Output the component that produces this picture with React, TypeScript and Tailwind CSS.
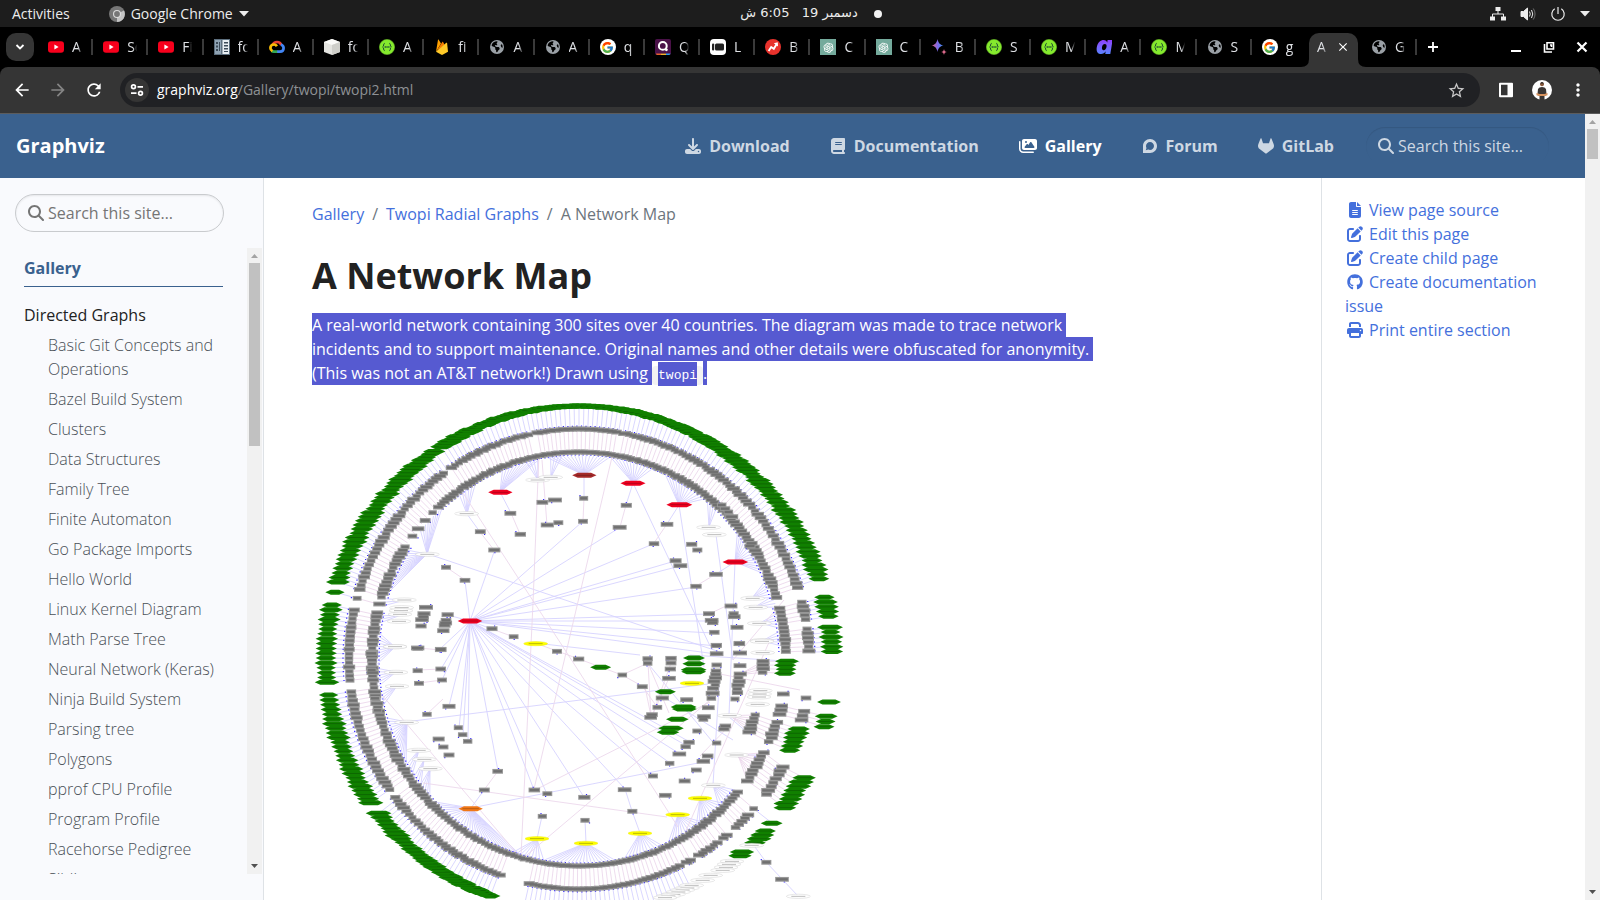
import type { ReactNode } from "react";
import {
  FaBook,
  FaDiscourse,
  FaDownload,
  FaEarthAmericas,
  FaFileLines,
  FaGithub,
  FaGitlab,
  FaImages,
  FaMagnifyingGlass,
  FaPenToSquare,
  FaPrint,
} from "react-icons/fa6";
import { FcGoogle } from "react-icons/fc";
import { AiOutlineOpenAI } from "react-icons/ai";
import {
  MdArrowBack,
  MdArrowForward,
  MdClose,
  MdMoreVert,
  MdRefresh,
  MdStarOutline,
} from "react-icons/md";

/* ---------- favicons ---------- */

const YouTube = () => (
  <svg viewBox="0 0 16 16" className="size-4">
    <rect x="0" y="2.3" width="16" height="11.4" rx="3" fill="#f8001c" />
    <path d="M6.4 5.5v5l4.2-2.5z" fill="#fff" />
  </svg>
);
const Notebook = () => (
  <svg viewBox="0 0 16 16" className="size-4">
    <rect width="16" height="16" fill="#5d6f7e" />
    <rect x="1" y="1" width="6" height="14" fill="#8fa3b3" />
    <rect x="8.5" y="1" width="6.5" height="14" fill="#e8eef2" />
    <path d="M2 3h2v2H2zM2 6.5h2v2H2zM2 10h2v2H2zM5 3h1v9H5z" fill="#3c4b58" />
    <path d="M10 3h4v1.5h-4zM10 6h4v1.5h-4zM10 9h4v1.5h-4zM10 12h4v1h-4z" fill="#3c4b58" />
  </svg>
);
const Cloud = () => (
  <svg viewBox="0 0 16 16" className="size-4" fill="none" strokeWidth="2.7">
    <path d="M3.6 6.2C4.4 3.9 6 3 8 3c2.100 0 3.700 1.200 4.300 3.200" stroke="#ea4335" />
    <path d="M12 5.500c1.700.8 2.600 2 2.600 3.500 0 2.200-1.500 3.600-3.600 3.600H8" stroke="#4285f4" />
    <path d="M8.200 12.600H5c-1 0-1.700-.2-2.300-.7" stroke="#34a853" />
    <path d="M3.400 12.200C2 11.300 1.400 10.300 1.400 9c0-2 1.500-3.500 3.500-3.500 1.300 0 2.300.6 3 1.700" stroke="#fbbc05" />
  </svg>
);
const Box = () => (
  <svg viewBox="0 0 16 16" className="size-4">
    <path d="M8 0l8 3v10l-8 3-8-3V3z" fill="#e4e4e0" />
    <path d="M8 0l8 3-8 3-8-3z" fill="#fafaf8" />
    <path d="M8 6l8-3v10l-8 3z" fill="#cfcfca" />
  </svg>
);
const Swagger = () => (
  <svg viewBox="0 0 16 16" className="size-4" fill="none" stroke="#1d4a33">
    <circle cx="8" cy="8" r="7.600" fill="#85ea2d" stroke="#6bbf2a" strokeWidth=".6" />
    <path d="M5.700 4.300C4 4.300 5.300 7.500 3.600 8c1.700.5.4 3.700 2.100 3.700M10.300 4.300c1.700 0 .4 3.200 2.100 3.700-1.700.5-.4 3.700-2.100 3.700" strokeWidth="1" />
    <path d="M5.600 8h5" strokeWidth="1.300" strokeDasharray="1.300 .5" />
  </svg>
);
const Firebase = () => (
  <svg viewBox="0 0 16 16" className="size-4">
    <path d="M2 12.800L4 .8c.1-.4.5-.5.700-.1L7 4.600z" fill="#ffa000" />
    <path d="M2 12.800L8.300 3c.2-.4.600-.4.800 0l1.500 3z" fill="#f57c00" />
    <path d="M2 12.800L12.300 3.800c.3-.2.700-.1.800.3L14 12.800l-5.400 3c-.4.200-.8.200-1.200 0z" fill="#ffca28" />
  </svg>
);
const Globe = () => (
  <span className="flex size-4 shrink-0 items-center justify-center">
    <FaEarthAmericas size={14} color="#9aa0a6" />
  </span>
);
const Google = () => (
  <span className="flex size-4 items-center justify-center rounded-full bg-white">
    <FcGoogle size={13} />
  </span>
);
const Quiz = () => (
  <svg viewBox="0 0 16 16" className="size-4">
    <rect width="16" height="16" rx="2" fill="#4a1148" />
    <circle cx="7.800" cy="6.900" r="3.900" fill="none" stroke="#fff" strokeWidth="2" />
    <circle cx="11.400" cy="10.800" r="1.400" fill="#fff" />
    <path d="M1 14.600h5V16H2q-1 0-1-1.400z" fill="#e8612c" />
    <path d="M6 14.600h5V16H6z" fill="#f0b429" />
    <path d="M11 14.600h4.500q-.3 1.400-1.500 1.400h-3z" fill="#2f9be8" />
  </svg>
);
const Panels = () => (
  <svg viewBox="0 0 16 16" className="size-4">
    <rect width="16" height="16" rx="4" fill="#fff" />
    <rect x="2" y="4.500" width="2.200" height="7" rx="1" fill="#222" />
    <rect x="5" y="4.500" width="9" height="7" rx="1.500" fill="#222" />
  </svg>
);
const Chart = () => (
  <svg viewBox="0 0 16 16" className="size-4">
    <circle cx="8" cy="8" r="8" fill="#e8322c" />
    <path d="M3.600 12l2.600-4 2.600 1.800 2.600-4.300" fill="none" stroke="#fff" strokeWidth="1.900" />
    <path d="M8.800 4.200l4-1 .2 4.200z" fill="#fff" />
  </svg>
);
const OpenAI = () => (
  <span className="flex size-4 items-center justify-center bg-[#74aa9c]">
    <AiOutlineOpenAI size={13} color="#fff" />
  </span>
);
const Bard = () => (
  <svg viewBox="0 0 16 16" className="size-4">
    <defs>
      <linearGradient id="bard" x1="0" x2="1" y1="0.500" y2="0.500">
        <stop offset="0" stopColor="#e0607c" />
        <stop offset=".5" stopColor="#7f6be8" />
        <stop offset="1" stopColor="#3a8df0" />
      </linearGradient>
    </defs>
    <path d="M6.500 0c.8 4 2.200 5.600 6 6.500-3.800.9-5.200 2.500-6 6.500-.8-4-2.200-5.600-6-6.500 3.800-.9 5.200-2.500 6-6.500z" fill="url(#bard)" />
    <path d="M13 10c.4 1.900 1 2.600 3 3-2 .4-2.600 1.100-3 3-.4-1.900-1-2.600-3-3 2-.4 2.600-1.100 3-3z" fill="#d9688a" />
  </svg>
);
const LetterA = () => (
  <span className="flex size-4 items-center justify-center bg-linear-to-b from-[#8f35ff] to-[#4f86ff] bg-clip-text pb-1 font-['Inter',sans-serif] text-[26px] leading-4 font-black text-transparent italic">
    a
  </span>
);

const TABS: [ReactNode, string][] = [
  [<YouTube />, "A"],
  [<YouTube />, "Se"],
  [<YouTube />, "Fi"],
  [<Notebook />, "fo"],
  [<Cloud />, "A"],
  [<Box />, "fo"],
  [<Swagger />, "A"],
  [<Firebase />, "fi"],
  [<Globe />, "A"],
  [<Globe />, "A"],
  [<Google />, "q"],
  [<Quiz />, "Q"],
  [<Panels />, "L"],
  [<Chart />, "B"],
  [<OpenAI />, "C"],
  [<OpenAI />, "C"],
  [<Bard />, "B"],
  [<Swagger />, "S"],
  [<Swagger />, "M"],
  [<LetterA />, "A"],
  [<Swagger />, "M"],
  [<Globe />, "S"],
  [<Google />, "g"],
];

/* ---------- desktop bar, tab strip, toolbar ---------- */

function DesktopBar() {
  return (
    <div className="grid h-[27px] shrink-0 grid-cols-[1fr_auto_1fr] items-center bg-[#1d1d1d] pr-2 pl-3 text-sm text-[#ececec]">
      <div className="flex items-center">
        <button className="mr-[39px]">Activities</button>
        <button className="flex items-center gap-[6px]">
          <svg viewBox="0 0 16 16" className="size-4">
            <circle cx="8" cy="8" r="8" fill="#777" />
            <path d="M8 8l7-3.600A8 8 0 0 1 8 16z" fill="#c4c4c4" />
            <circle cx="8" cy="8" r="4" fill="#ddd" />
            <circle cx="8" cy="8" r="2.900" fill="#777" />
          </svg>
          Google Chrome
          <svg viewBox="0 0 10 6" className="h-[6px] w-[10px]" fill="#ececec">
            <path d="M0 0h10L5 5.500z" />
          </svg>
        </button>
      </div>
      <div className="flex items-center gap-4 pl-[18px]">
        <span dir="rtl" className="font-['DejaVu_Sans',sans-serif] text-[13px] whitespace-pre">
          دسمبر 19{"   "}6:05 ش
        </span>
        <span className="size-2 rounded-full bg-[#f2f2f2]" />
      </div>
      <div className="flex items-center justify-end gap-[14px] pr-[2px]">
        <svg viewBox="0 0 16 16" className="size-4" fill="#ececec">
          <path d="M5.500 1h5v4h-5zM0 10.500h5v4H0zM11 10.500h5v4h-5z" />
          <path d="M8 5v3M2.500 11V8h11v3" fill="none" stroke="#ececec" />
        </svg>
        <svg viewBox="0 0 16 16" className="size-4" fill="none" stroke="#ececec">
          <path d="M1 5.500h2.500L7.500 2v12l-4-3.500H1z" fill="#ececec" />
          <path d="M9.500 5.500q1.500 2.500 0 5M11.500 4q2.500 4 0 8" />
          <path d="M13.300 2.500q3.500 5.500 0 11" opacity=".4" />
        </svg>
        <svg viewBox="0 0 16 16" className="size-4" fill="none" stroke="#ececec" strokeWidth="1.200">
          <path d="M4.700 2.800a6.200 6.200 0 1 0 6.600 0M8 1v7" />
        </svg>
        <svg viewBox="0 0 10 6" className="h-[6px] w-[10px]" fill="#ececec">
          <path d="M0 0h10L5 5.500z" />
        </svg>
      </div>
    </div>
  );
}

function TabLabel({ children }: { children: ReactNode }) {
  return (
    <span className="w-[10px] shrink-0 overflow-hidden mask-r-from-60% text-sm whitespace-nowrap">
      {children}
    </span>
  );
}

function TabStrip() {
  return (
    <div className="flex h-10 shrink-0 items-center bg-black text-[#dfe1e5]">
      <button aria-label="Search tabs" className="ml-[6px] flex size-7 items-center justify-center rounded-[10px] bg-[#353535]">
        <svg viewBox="0 0 10 10" className="size-[10px]" fill="none" stroke="#fff" strokeWidth="1.800">
          <path d="M1.500 3L5 6.500 8.500 3" />
        </svg>
      </button>
      <div className="ml-1 flex flex-1 items-center">
        {TABS.map(([icon, title], i) => (
          <div key={i} className="flex h-4 min-w-0 flex-1 items-center gap-2 border-r-2 border-[#3a3a3a] pl-[10px] last:border-transparent">
            {icon}
            <TabLabel>{title}</TabLabel>
          </div>
        ))}
      </div>
      <div className="flex h-10 w-[293px] shrink-0 items-center">
        <div className="relative mx-[2px] mt-[6px] flex h-[34px] w-[49px] items-center gap-[9px] rounded-t-[10px] bg-[#353535] pb-[6px] pl-2">
          <svg viewBox="0 0 65 8" className="absolute bottom-0 -left-2 h-2 w-[65px]" fill="#353535">
            <path d="M8 0v8H0q8 0 8-8zM57 0v8h8q-8 0-8-8z" />
          </svg>
          <TabLabel>A</TabLabel>
          <button aria-label="Close tab">
            <MdClose size={14} color="#fff" />
          </button>
        </div>
        <div className="ml-[11px] flex h-4 w-[46px] items-center gap-2 border-r-2 border-[#3a3a3a]">
          <Globe />
          <TabLabel>G</TabLabel>
        </div>
        <button aria-label="New tab" className="ml-[10px]">
          <svg viewBox="0 0 12 12" className="size-3" stroke="#fff" strokeWidth="1.800">
            <path d="M6 1v10M1 6h10" />
          </svg>
        </button>
        <div className="ml-auto flex items-center gap-[21px] pr-3">
          <button aria-label="Minimize">
            <svg viewBox="0 0 12 12" className="size-3" stroke="#fff" strokeWidth="2">
              <path d="M1 10h10" />
            </svg>
          </button>
          <button aria-label="Restore">
            <svg viewBox="0 0 12 12" className="size-3" fill="none" stroke="#fff" strokeWidth="1.600">
              <path d="M4 1.800h6.500V8H4zM1.500 3v8H9" />
              <path d="M7 4h1.500v2" />
            </svg>
          </button>
          <button aria-label="Close">
            <svg viewBox="0 0 12 12" className="size-3" stroke="#fff" strokeWidth="2.200">
              <path d="M1.500 1.500l9 9M10.500 1.500l-9 9" />
            </svg>
          </button>
        </div>
      </div>
    </div>
  );
}

function Toolbar() {
  return (
    <div className="shrink-0 bg-black">
      <div className="flex h-[47px] items-center rounded-t-lg border-b border-[#5c5c5c] bg-[#353535] pr-3 pl-3">
        <button aria-label="Back" className="mr-4">
          <MdArrowBack size={20} color="#fff" />
        </button>
        <button aria-label="Forward" className="mr-4">
          <MdArrowForward size={20} color="#858585" />
        </button>
        <button aria-label="Reload" className="mr-4">
          <MdRefresh size={20} color="#fff" />
        </button>
        <div className="flex h-[34px] flex-1 items-center rounded-full bg-[#202124] pr-[14px] pl-[5px]">
          <button aria-label="Site information" className="mr-2 flex size-6 items-center justify-center rounded-full bg-[#353535]">
            <svg viewBox="0 0 14 14" className="size-[14px]" fill="none" stroke="#fff" strokeWidth="1.700">
              <circle cx="3.500" cy="3.800" r="1.900" />
              <path d="M7.500 3.800H13M1 10.200h5.500" />
              <circle cx="10.500" cy="10.200" r="1.900" />
            </svg>
          </button>
          <span className="flex-1 text-sm text-[#8e9195]">
            <span className="text-white">graphviz.org</span>/Gallery/twopi/twopi2.html
          </span>
          <button aria-label="Bookmark">
            <MdStarOutline size={19} color="#c7c7c7" />
          </button>
        </div>
        <button aria-label="Side panel" className="mr-[18px] ml-[18px]">
          <svg viewBox="0 0 16 16" className="size-4">
            <path d="M2 1.800h12v12.400H2z" fill="none" stroke="#fff" strokeWidth="2" strokeLinejoin="round" />
            <path d="M9.500 2H14v12H9.500z" fill="#fff" />
          </svg>
        </button>
        <button aria-label="Profile" className="mr-4">
          <svg viewBox="0 0 20 20" className="size-5">
            <circle cx="10" cy="10" r="10" fill="#fff" />
            <circle cx="10" cy="4.300" r="2" fill="#8a5a3c" />
            <path d="M8 3.500q2-3 4 0z" fill="#222" />
            <path d="M6 9q1-2 4-2t4 2l.6 6-2.100 1v4H7.500v-4l-2.100-1z" fill="#3b3634" />
            <path d="M4.500 13l3 1h5l3-1v2.200l-3 .8h-5l-3-.8z" fill="#d8935f" />
          </svg>
        </button>
        <button aria-label="Menu">
          <MdMoreVert size={20} color="#fff" />
        </button>
      </div>
    </div>
  );
}

/* ---------- scroll bars ---------- */

function ScrollBar({ thumb }: { thumb: string }) {
  return (
    <div aria-hidden className="flex w-[15px] shrink-0 flex-col items-center bg-[#f1f1f1]">
      <svg viewBox="0 0 15 15" className="size-[15px] shrink-0" fill="#a3a3a3">
        <path d="M4 10h7L7.500 6z" />
      </svg>
      <div className={`w-[11px] bg-[#c1c1c1] ${thumb}`} />
      <svg viewBox="0 0 15 15" className="mt-auto size-[15px] shrink-0" fill="#505050">
        <path d="M4 5h7L7.500 9z" />
      </svg>
    </div>
  );
}

/* ---------- the radial network drawing ---------- */

type Pt = [number, number];
const CX = 579;
const CY = 659;
const OUTER = 253;
const MIDDLE = 230;
const INNER = 207;
const STEP = 1.1;

const polar = (r: number, deg: number): Pt => {
  const a = (deg * Math.PI) / 180;
  return [CX + r * Math.sin(a), CY - r * Math.cos(a)];
};
const noise = (n: number) => {
  const v = Math.sin(n * 12.9898) * 43758.5453;
  return v - Math.floor(v);
};
const arc = (from: number, to: number) => {
  const out: number[] = [];
  for (let a = from; a <= to + 0.01; a += STEP) out.push(a);
  return out;
};
/* Sheets of the drawing: every sheet has its own origin, at three units to the pixel. */
const sheet = (ox: number, oy: number) => (list: Pt[]): Pt[] =>
  list.map(([x, y]) => [ox + x / 3, oy + y / 3]);
const nw = sheet(300, 390);
const ne = sheet(570, 390);
const sw = sheet(300, 640);
const se = sheet(570, 640);
const chain = (x1: number, y1: number, x2: number, y2: number, n: number): Pt[] =>
  Array.from({ length: n }, (_, i) => [
    x1 + ((x2 - x1) * i) / (n - 1) + (noise(i + x1) - 0.5) * 6,
    y1 + ((y2 - y1) * i) / (n - 1),
  ]);

const outerAngles = [
  [-159.5, -127], [-124.6, -97.5], [-95.3, -77], [-74.7, -74.7], [-72.3, -34.5],
  [-33, 72.3], [75.9, 80.5], [82.8, 88.4],
].flatMap(([a, b]) => arc(a, b));
const middleAngles = [
  [-160, -127], [-124.6, -97.5], [-95.3, -77], [-74.7, -74.7], [-72.4, -35.8], [-33.7, -12.4],
  [-10.4, 9.7], [11.4, 72.3], [75.7, 80.5], [82.5, 88.3], [130.6, 130.6], [132.7, 138],
  [140, 141.2], [143, 149], [151, 152.2], [154, 193.5],
].flatMap(([a, b]) => arc(a, b));
const innerAngles = [
  [-76.8 - 153.200, -76.8], [-74.6, -74.6], [-72.6, -56.4], [-53.6, -53.6], [-51, -51],
  [-48, -48], [-45, -45], [-42.8, 73.4], [75.8, 88.3],
].flatMap(([a, b]) => arc(a, b));

const grayNodes: Pt[] = [
  ...nw([
    [631, 370], [541, 425], [661, 433], [583, 480], [438, 532], [495, 571], [727, 337], [765, 330],
    [742, 405], [775, 398], [378, 652], [372, 671], [370, 680], [366, 689], [363, 708], [443, 674],
    [438, 691], [437, 699], [434, 706], [430, 722], [576, 716], [641, 740], [353, 775], [422, 778],
  ]),
  ...ne([
    [41, 325], [39, 394], [169, 346], [149, 412], [291, 403], [252, 461], [365, 463], [382, 480],
    [317, 512], [331, 527], [438, 553], [378, 589], [483, 648], [417, 671], [425, 691], [428, 698],
    [491, 671], [493, 680], [501, 712], [433, 727], [508, 761], [439, 767],
    [455, 345], [465, 356], [475, 366], [485, 380], [545, 460], [540, 468],
  ]),
  ...sw([
    [353, 24], [422, 29], [353, 92], [422, 87], [357, 130], [426, 120], [381, 223], [447, 199],
    [475, 263], [488, 284], [503, 304], [416, 297], [430, 321], [447, 345], [593, 394], [553, 450],
    [703, 450], [742, 461], [727, 529], [771, 34], [214, 40], [215, 90], [218, 98], [225, 175],
    [233, 211], [293, 360],
  ]),
  ...se([
    [26, 57], [157, 105], [233, 56], [233, 70], [217, 140], [303, 55], [303, 69], [301, 87],
    [297, 115], [277, 174], [262, 202], [246, 224], [242, 232], [350, 179], [415, 203], [402, 230],
    [400, 238], [381, 273], [357, 307], [347, 320], [328, 342], [299, 370], [249, 408], [413, 348],
    [400, 364], [379, 390], [344, 423], [286, 466], [164, 449], [187, 514], [43, 472], [45, 541],
    [440, 309], [466, 258], [462, 267], [439, 16], [440, 41], [508, 10], [510, 39], [440, 75],
    [510, 77], [428, 160], [424, 175], [495, 177], [640, 162], [708, 174], [589, 667], [636, 718],
    ...chain(437, 93, 432, 145, 6),
    ...chain(508, 102, 500, 158, 6),
    ...chain(580, 64, 580, 97, 4),
    ...chain(632, 198, 628, 223, 3),
    ...chain(700, 214, 693, 240, 3),
    ...chain(555, 225, 535, 276, 6),
    ...chain(622, 247, 598, 305, 6),
    ...chain(582, 338, 530, 423, 9),
    ...chain(640, 381, 588, 463, 8),
  ]),
];
const greenNodes: Pt[] = se([
  [92, 82], [372, 54], [372, 71], [371, 89], [371, 95], [286, 155], [341, 201], [343, 207],
  [322, 238], [303, 265], [294, 277], [777, 186], [605, 550], [516, 636], [510, 647],
  ...chain(650, 64, 645, 100, 4),
  ...chain(768, 229, 760, 260, 3),
  ...chain(687, 267, 660, 331, 6),
  ...chain(700, 413, 643, 503, 8),
  ...chain(587, 573, 553, 608, 4),
]);
const whiteNodes: Pt[] = [
  ...nw([[713, 270], [752, 262], [500, 371], [382, 493], [313, 630], [305, 653], [303, 662], [300, 673], [297, 694], [285, 770]]),
  ...ne([[416, 412], [433, 434], [548, 625], [557, 652], [568, 700], [576, 752]]),
  ...sw([[285, 20], [288, 97], [291, 139], [320, 247], [356, 331], [373, 358], [391, 386]]),
  ...se([
    [576, 4], [578, 38], [571, 152], [569, 162], [567, 171], [563, 193], [479, 227], [500, 345],
    [430, 436], [545, 616], [486, 664], [477, 673], [468, 682], [458, 691], [422, 706], [398, 721],
    [365, 736], [352, 744], [338, 750], [325, 756], [310, 763], [295, 768], [285, 773], [685, 769],
  ]),
];
const yellowNodes: Pt[] = [
  ...nw([[707, 761]]),
  ...sw([[711, 596]]),
  ...se([[366, 130], [390, 475], [323, 524], [210, 580], [48, 610]]),
];
const redNodes: Pt[] = [...nw([[601, 307], [510, 693]]), ...ne([[189, 280], [328, 344], [496, 516]])];

/* hub position, then the span of the inner ring that it feeds */
const fans: [Pt, number, number][] = [
  [[500, 492], -22, -10], [[584, 475], -9, 9], [[633, 483], 9, 22], [[679, 505], 25, 39],
  [[735, 562], 51, 66], [[538, 480], -15, -11], [[551, 477], -8, -4], [[467, 514], -36, -30],
  [[427, 554], -72, -57], [[427, 554], -51, -42], [[709, 527], 39, 43], [[752, 598], 67, 73],
  [[755, 607], 72, 76], [[760, 623], 77, 82], [[762, 641], 82, 87], [[395, 647], -92, -82],
  [[396, 672], -98, -92], [[397, 686], -104, -99], [[407, 722], -122, -106],
  [[419, 750], -125, -121], [[424, 760], -129, -125], [[430, 769], -133, -128],
  [[471, 808], -163, -134], [[537, 839], -170, -161], [[586, 843], -190, -170],
  [[640, 833], -204, -192], [[678, 815], -217, -205], [[700, 798], -225, -215],
  [[713, 785], -230, -223], [[405, 600], -75, -72], [[401, 615], -80, -77],
];

const HUB: Pt = [470, 621];
const hubTargets: Pt[] = [
  [494, 552], [465, 581], [582, 522], [619, 528], [653, 544], [675, 561], [680, 566], [696, 587],
  [709, 614], [711, 621], [714, 633], [716, 646], [716, 654], [492, 629], [444, 614], [440, 649],
  [441, 669], [442, 680], [449, 706], [459, 728], [463, 735], [468, 741], [498, 771], [534, 790],
  [547, 794], [584, 797], [625, 789], [653, 776], [670, 763], [680, 754], [687, 746], [690, 742],
];
const blueLines: [Pt, Pt][] = [
  [[428, 554], [720, 652]], [[405, 722], [708, 684]], [[471, 808], [703, 762]],
  [[633, 483], [710, 646]], [[679, 505], [704, 667]], [[735, 562], [729, 715]],
  [[716, 535], [733, 660]], [[535, 643], [640, 655]], [[500, 492], [511, 513]],
  [[467, 514], [480, 532]], [[584, 475], [584, 498]], [[633, 483], [626, 505]],
  [[679, 505], [667, 524]], [[735, 562], [716, 574]], [[471, 808], [484, 790]],
  [[537, 839], [542, 816]], [[586, 843], [585, 820]], [[640, 833], [632, 811]],
  [[632, 811], [625, 789]], [[713, 785], [720, 670]], [[690, 655], [800, 662]],
  [[728, 716], [748, 733]], [[736, 755], [760, 755]], [[645, 660], [716, 746]],
  [[657, 693], [733, 740]], [[755, 847], [766, 862]], [[766, 862], [782, 879]], [[782, 879], [798, 896]],
  [[754, 809], [772, 823]],
];
const pinkLines: [Pt, Pt][] = [
  [[539, 453], [533, 603]], [[533, 603], [521, 856]], [[612, 457], [534, 789]],
  [[463, 493], [578, 670]], [[578, 670], [678, 827]], [[382, 695], [520, 857]],
  [[423, 783], [667, 817]], [[710, 702], [535, 790]], [[710, 700], [521, 860]],
  [[770, 640], [685, 833]], [[511, 513], [520, 534]], [[480, 532], [494, 550]],
  [[584, 498], [583, 521]], [[626, 505], [620, 527]], [[667, 524], [654, 543]],
  [[716, 574], [696, 586]], [[446, 567], [465, 580]], [[726, 606], [709, 614]],
  [[648, 663], [669, 713]], [[648, 663], [651, 716]], [[645, 687], [651, 716]],
  [[643, 687], [657, 707]], [[671, 663], [652, 716]], [[669, 678], [653, 714]],
  [[622, 675], [642, 686]], [[622, 675], [648, 663]], [[720, 674], [800, 690]],
  [[484, 790], [498, 771]], [[443, 699], [427, 714]], [[418, 648], [441, 650]],
  [[418, 670], [441, 669]], [[419, 683], [442, 680]], [[492, 629], [514, 637]],
  [[579, 659], [622, 675]], [[535, 643], [579, 659]], [[542, 460], [547, 525]],
  [[733, 660], [784, 600]], [[700, 756], [730, 725]],
];
const extraLinks: [Pt[], Pt[]][] = [
  [se(chain(555, 225, 535, 276, 6)), se(chain(622, 247, 598, 305, 6))],
  [se(chain(622, 247, 598, 305, 6)), se(chain(687, 267, 660, 331, 6))],
  [se(chain(582, 338, 530, 423, 8)), se(chain(640, 381, 588, 463, 8))],
  [se(chain(640, 381, 588, 463, 8)), se(chain(700, 413, 643, 503, 8))],
  [se(chain(580, 64, 580, 97, 4)), se(chain(650, 64, 645, 100, 4))],
  [se(chain(508, 102, 508, 104, 4)), se(chain(580, 64, 580, 97, 4))],
  [se(chain(632, 198, 628, 223, 3)), se(chain(700, 214, 693, 240, 3))],
  [se(chain(700, 214, 693, 240, 3)), se(chain(768, 229, 760, 260, 3))],
  [se(chain(500, 345, 502, 347, 9)), se(chain(582, 338, 530, 423, 9))],
  [se(chain(479, 227, 481, 229, 6)), se(chain(555, 225, 535, 276, 6))],
];

const seg = ([x1, y1]: Pt, [x2, y2]: Pt) =>
  `M${x1.toFixed(1)} ${y1.toFixed(1)}L${x2.toFixed(1)} ${y2.toFixed(1)}`;

function Rects({ points, min, spread }: { points: Pt[]; min: number; spread: number }) {
  return (
    <>
      {points.map(([x, y], i) => {
        const w = min + noise(i + 3) * spread;
        return <rect key={i} x={x - w / 2} y={y - 2.4} width={w} height="4.800" fill="#989898" />;
      })}
      {points.map(([x, y], i) => {
        const w = min + noise(i + 3) * spread;
        return <rect key={i} x={x - w / 2 + 1} y={y - 1.2} width={w - 2} height="2.400" fill="#707070" />;
      })}
    </>
  );
}

function Hexagons({ points, fill, ink, min, spread }: { points: Pt[]; fill: string; ink: string; min: number; spread: number }) {
  return (
    <>
      {points.map(([x, y], i) => {
        const h = (min + noise(i + 7) * spread) / 2;
        return (
          <g key={i}>
            <path
              d={`M${x - h} ${y}L${x - h + 5.5} ${y - 2.5}H${x + h - 5.5}L${x + h} ${y}L${x + h - 5.5} ${y + 2.5}H${x - h + 5.5}Z`}
              fill={fill}
            />
            <path d={`M${x - h + 4} ${y}H${x + h - 4}`} stroke={ink} strokeWidth=".7" />
          </g>
        );
      })}
    </>
  );
}

function Ellipses({ points, fill, edge, ink }: { points: Pt[]; fill: string; edge: string; ink: string }) {
  return (
    <>
      {points.map(([x, y], i) => (
        <g key={i}>
          <ellipse cx={x} cy={y} rx="12" ry="2.100" fill={fill} stroke={edge} strokeWidth=".4" />
          <path d={`M${x - 7} ${y}H${x + 7}`} stroke={ink} strokeWidth=".8" />
        </g>
      ))}
    </>
  );
}

function NetworkMap() {
  const spokesOut = [...outerAngles, ...arc(154, 193.5)];
  const blue = [
    ...spokesOut.map((a) => seg(polar(MIDDLE, a), polar(OUTER, a))),
    ...fans.flatMap(([hub, a, b]) => arc(a, b).map((t) => seg(hub, polar(INNER - 3, t)))),
    ...hubTargets.map((p) => seg(HUB, p)),
    ...blueLines.map(([p, q]) => seg(p, q)),
  ].join("");
  const pink = [
    ...middleAngles.map((a) => seg(polar(INNER, a), polar(MIDDLE, a))),
    ...pinkLines.map(([p, q]) => seg(p, q)),
    ...extraLinks.flatMap(([from, to]) => from.map((p, i) => seg(p, to[i]))),
  ].join("");
  const ports: Pt[] = [
    ...innerAngles.map((a): Pt => {
      const [x, y] = polar(INNER, a);
      const s = Math.sin((a * Math.PI) / 180);
      return [x - s * 7, y + Math.cos((a * Math.PI) / 180) * 2.8];
    }),
    ...middleAngles.map((a): Pt => {
      const [x, y] = polar(MIDDLE, a);
      const s = Math.sin((a * Math.PI) / 180);
      return [x + s * 6, y - Math.cos((a * Math.PI) / 180) * 2.8];
    }),
    ...grayNodes.map(([x, y], i): Pt => [x + (noise(i) - 0.5) * 10, y + (i % 2 ? 2.6 : -2.6)]),
  ];
  return (
    <svg viewBox="312 403 536 536" className="block size-[536px] max-w-full" role="img" aria-label="Radial network map">
      <path d={blue} stroke="#d6d2ff" strokeWidth=".9" fill="none" />
      <path d={pink} stroke="#ecd8ec" strokeWidth=".9" fill="none" />
      <path
        d={ports.map(([x, y]) => `M${(x - 0.6).toFixed(1)} ${y.toFixed(1)}h1.200`).join("")}
        stroke="#3226ff"
        strokeWidth="1.200"
      />
      <Hexagons points={outerAngles.map((a) => polar(OUTER, a))} fill="#118000" ink="#0b5c00" min={19} spread={7} />
      <Rects points={middleAngles.map((a) => polar(MIDDLE, a))} min={8} spread={5} />
      <Rects points={innerAngles.map((a) => polar(INNER, a))} min={8} spread={5} />
      <Rects points={grayNodes} min={9} spread={5} />
      <Hexagons points={greenNodes} fill="#118000" ink="#0b5c00" min={20} spread={6} />
      <Ellipses points={whiteNodes} fill="#fff" edge="#c4c4c4" ink="#aaa" />
      <Ellipses points={yellowNodes} fill="#ff0" edge="#e8e800" ink="#a8a800" />
      <Hexagons points={redNodes} fill="#ee0020" ink="#a00018" min={24} spread={2} />
      <Hexagons points={ne([[43, 256]])} fill="#a52a2a" ink="#701c1c" min={24} spread={2} />
      <Hexagons points={sw([[512, 506]])} fill="#f07818" ink="#a85010" min={24} spread={2} />
    </svg>
  );
}

/* ---------- page ---------- */

const NAV = [
  { label: "Download", Icon: FaDownload, size: 16 },
  { label: "Documentation", Icon: FaBook, size: 16 },
  { label: "Gallery", Icon: FaImages, size: 18, active: true },
  { label: "Forum", Icon: FaDiscourse, size: 16 },
  { label: "GitLab", Icon: FaGitlab, size: 16 },
];

const GRAPHS = [
  "Basic Git Concepts and Operations",
  "Bazel Build System",
  "Clusters",
  "Data Structures",
  "Family Tree",
  "Finite Automaton",
  "Go Package Imports",
  "Hello World",
  "Linux Kernel Diagram",
  "Math Parse Tree",
  "Neural Network (Keras)",
  "Ninja Build System",
  "Parsing tree",
  "Polygons",
  "pprof CPU Profile",
  "Program Profile",
  "Racehorse Pedigree",
  "Siblings",
];

const PAGE_LINKS = [
  { label: "View page source", Icon: FaFileLines },
  { label: "Edit this page", Icon: FaPenToSquare },
  { label: "Create child page", Icon: FaPenToSquare },
  { label: "Create documentation issue", Icon: FaGithub },
  { label: "Print entire section", Icon: FaPrint },
];

function SiteHeader() {
  return (
    <header className="flex h-16 shrink-0 items-center bg-[#3a618e] pr-9 pl-4 text-white">
      <a href="#home" className="text-xl font-bold">
        Graphviz
      </a>
      <nav className="ml-auto flex gap-[38px] font-bold">
        {NAV.map(({ label, Icon, size, active }) => (
          <a key={label} href={`#${label}`} className={`flex items-center gap-[6px] ${active ? "text-white" : "text-[#ced8e3]"}`}>
            <span className={`flex justify-center ${active ? "w-[22px]" : "w-5"}`}>
              <Icon size={size} />
            </span>
            {label}
          </a>
        ))}
      </nav>
      <label className="ml-8 flex h-[38px] w-[183px] items-center gap-1 rounded-full pl-3 text-[#ced8e3] shadow-[inset_0_1px_1px_rgba(0,0,0,0.1)]">
        <FaMagnifyingGlass size={16} className="shrink-0" />
        <input type="search" aria-label="Search this site" placeholder="Search this site…" className="w-full min-w-0 bg-transparent outline-none placeholder:text-[#ced8e3]" />
      </label>
    </header>
  );
}

function Sidebar() {
  return (
    <aside className="flex w-[264px] shrink-0 flex-col border-r border-[#dee2e6] bg-[#f9fafd]">
      <label className="mt-4 ml-[15px] flex h-[38px] w-[209px] shrink-0 items-center gap-1 rounded-full border border-[#c9cbce] pl-3 text-[#757575] shadow-[inset_0_1px_2px_rgba(0,0,0,0.08)]">
        <FaMagnifyingGlass size={16} className="shrink-0" />
        <input type="search" aria-label="Search this site" placeholder="Search this site…" className="w-full min-w-0 bg-transparent outline-none placeholder:text-[#757575]" />
      </label>
      <div className="mt-4 mb-[26px] flex min-h-0 flex-1 pr-px">
        <nav className="min-w-0 flex-1 overflow-hidden pr-6 pl-6">
          <a href="#gallery" className="mt-2 block border-b border-[#3a618e] pb-[6px] font-bold text-[#3a618e]">
            Gallery
          </a>
          <a href="#directed" className="mt-4 block text-[#222]">
            Directed Graphs
          </a>
          <ul className="mt-[6px] flex flex-col gap-[6px] pl-6">
            {GRAPHS.map((name) => (
              <li key={name}>
                <a href={`#${name}`} className="-mr-3 block font-light text-[#495057]">
                  {name}
                </a>
              </li>
            ))}
          </ul>
        </nav>
        <ScrollBar thumb="h-[183px]" />
      </div>
    </aside>
  );
}

function Article() {
  const marked = "bg-[#565ad1] py-px text-white";
  return (
    <main className="min-w-0 flex-1 overflow-hidden pt-6 pl-12">
      <nav className="flex gap-2 text-[#6c757d]">
        <a href="#gallery" className="text-[#4470dc]">
          Gallery
        </a>
        <span>/</span>
        <a href="#radial" className="text-[#4470dc]">
          Twopi Radial Graphs
        </a>
        <span>/</span>
        <span>A Network Map</span>
      </nav>
      <h1 className="mt-7 text-4xl leading-[44px] font-bold text-[#222]">A Network Map</h1>
      <p className="mt-[15px] whitespace-pre">
        <span className={marked}>A real-world network containing 300 sites over 40 countries. The diagram was made to trace network </span>
        <br />
        <span className={marked}>incidents and to support maintenance. Original names and other details were obfuscated for anonymity. </span>
        <br />
        <span className={marked}>(This was not an AT&amp;T network!) Drawn using </span>
        <code className="rounded bg-[#f2f2f2] px-[6px] py-[2px] font-['Liberation_Mono',monospace] text-[13px]">
          <span className="bg-[#565ad1] pt-[6px] pb-[3px] text-white">twopi</span>
        </code>
        <span className={marked}>.</span>
      </p>
      <div className="mt-[17px]">
        <NetworkMap />
      </div>
    </main>
  );
}

export default function App() {
  return (
    <div className="flex h-screen flex-col overflow-hidden bg-white font-['Open_Sans','Noto_Sans',sans-serif] text-base">
      <DesktopBar />
      <TabStrip />
      <Toolbar />
      <div className="flex min-h-0 flex-1">
        <div className="flex min-w-0 flex-1 flex-col">
          <SiteHeader />
          <div className="flex min-h-0 flex-1">
            <Sidebar />
            <Article />
            <aside className="w-[264px] shrink-0 border-l border-[#dee2e6] pt-5 pr-6 pl-[23px]">
              {PAGE_LINKS.map(({ label, Icon }) => (
                <a key={label} href={`#${label}`} className="block text-[#4470dc]">
                  <span className="mr-1 inline-flex w-5 justify-center align-[-2px]">
                    <Icon size={16} />
                  </span>
                  {label}
                </a>
              ))}
            </aside>
          </div>
        </div>
        <ScrollBar thumb="h-[30px]" />
      </div>
    </div>
  );
}
